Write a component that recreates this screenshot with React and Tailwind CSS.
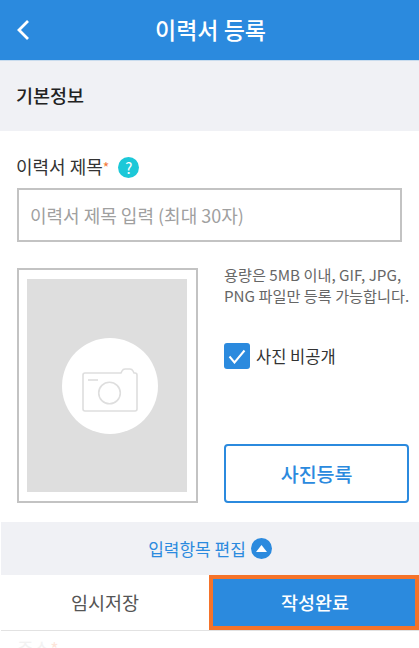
const font = { fontFamily: '"Noto Sans CJK KR", "Noto Sans", sans-serif' }

function CameraIcon() {
  return (
    <svg className="ml-[-1px] mt-[8px]" width="56" height="44" viewBox="0 0 56 44" fill="none" stroke="#dedede" strokeWidth="1.600">
      <path d="M3 5h36l1-2q1-2 3-2h5q2 0 3 2l1 2h1q2 0 2 2v34q0 2-2 2H3q-2 0-2-2V7q0-2 2-2z" />
      <circle cx="27.500" cy="25" r="10.800" />
      <path d="M6 12h10" />
    </svg>
  )
}

export default function App() {
  return (
    <div className="w-[419px] h-[648px] overflow-hidden bg-white flex flex-col" style={font}>

      {/* Header */}
      <div className="h-[61px] shrink-0 bg-[#2b8ade] border-b border-[#c9dcee] flex items-center justify-center relative pb-[2px] pl-[2px]">
        <svg className="absolute left-[16px] top-[19px]" width="14" height="22" viewBox="0 0 14 22" fill="none" stroke="#fff" strokeWidth="2.800">
          <path d="M12 2L3 11l9 9" />
        </svg>
        <h1 className="text-[23px] leading-none font-medium text-white">이력서 등록</h1>
      </div>

      {/* Section title */}
      <div className="h-[70px] shrink-0 bg-[#f0f1f5] flex items-center px-4">
        <h2 className="text-[18.500px] font-medium text-[#222]">기본정보</h2>
      </div>

      {/* Resume title */}
      <div className="h-[57px] shrink-0 flex items-end pb-[10px] px-4">
        <div className="flex items-center">
          <span className="-mt-[2px] text-[18px] leading-[22px] text-[#333]">이력서 제목</span>
          <span className="text-[14px] leading-[22px] text-[#f47a3a] self-start">*</span>
          <span className="ml-[9px] w-[21px] h-[21px] rounded-full bg-[#1cc8d8] text-white text-[15px] leading-[21px] text-center">?</span>
        </div>
      </div>
      <div className="mx-[17px] h-[54px] shrink-0 border-2 border-[#c3c3c3] flex items-center px-[11px]">
        <span className="text-[18px] text-[#a0a0a0]">이력서 제목 입력 (최대 30자)</span>
      </div>

      {/* Photo */}
      <div className="mt-[26px] ml-[17px] mr-[14px] h-[235px] shrink-0 flex gap-[26px]">
        <div className="w-[181px] shrink-0 border-2 border-[#c3c3c3] pl-[8px] pr-[9px] py-[9px]">
          <div className="h-full bg-[#dedede] flex items-center justify-center">
            <div className="ml-[6px] w-[96px] h-[96px] rounded-full bg-white flex items-center justify-center">
              <CameraIcon />
            </div>
          </div>
        </div>
        <div className="flex-1 flex flex-col">
          <p className="-mt-[4px] text-[15.200px] leading-[21px] text-[#666] whitespace-nowrap">
            용량은 5MB 이내, GIF, JPG,<br />PNG 파일만 등록 가능합니다.
          </p>
          <div className="mt-[37px] flex items-center gap-[6px]">
            <div className="w-[26px] h-[26px] rounded-[3px] bg-[#2b8ade] flex items-center justify-center">
              <svg width="18" height="15" viewBox="0 0 18 15" fill="none" stroke="#fff" strokeWidth="2">
                <path d="M1.500 7.500l5 6L16.500 1.500" />
              </svg>
            </div>
            <span className="text-[16.500px] text-[#333]">사진 비공개</span>
          </div>
          <div className="mt-auto h-[59px] border-2 border-[#2b8ade] rounded-[4px] flex items-center justify-center text-[19.500px] font-medium text-[#2b8ade]">
            사진등록
          </div>
        </div>
      </div>

      {/* Edit fields */}
      <div className="mt-[19px] ml-px h-[53px] shrink-0 bg-[#f0f1f5] flex items-center justify-center gap-[5px]">
        <span className="text-[17px] text-[#2b8ade]">입력항목 편집</span>
        <span className="w-[21px] h-[21px] rounded-full bg-[#2b8ade] flex items-center justify-center">
          <svg width="11" height="7" viewBox="0 0 11 7" fill="#fff"><path d="M5.500 0L11 7H0z" /></svg>
        </span>
      </div>

      {/* Bottom buttons */}
      <div className="ml-px h-[56px] shrink-0 flex border-b border-[#e2e2e2]">
        <div className="flex-1 flex items-center justify-center text-[18.500px] text-[#555]">임시저장</div>
        <div className="w-[210px] bg-[#2b8ade] border-4 border-[#f5732a] flex items-center justify-center pl-[2px] text-[18.500px] font-medium text-white">
          작성완료
        </div>
      </div>

      <div className="px-[17px] pt-[6px] text-[18px] leading-[22px] text-[#f2f2f2]">주소<span className="text-[#fde6da]">*</span></div>
    </div>
  )
}
